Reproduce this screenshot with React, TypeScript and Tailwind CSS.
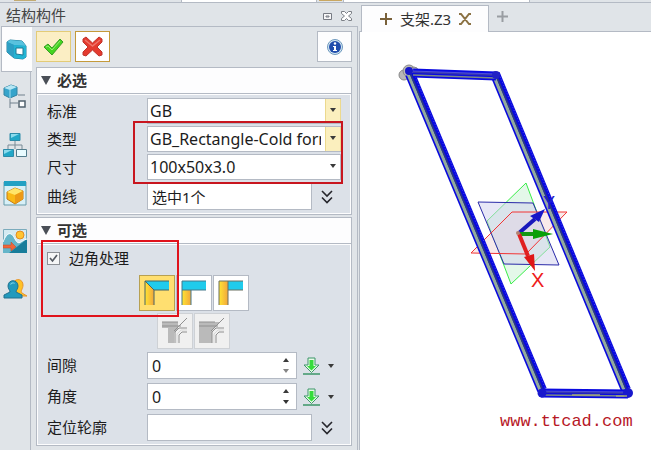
import React from "react";

const field = "border border-[#b4bac4] bg-white text-[#1c1c1c] outline-none";

function Caret({ tone = "#3a3a3a" }: { tone?: string }) {
  return (
    <svg width="6" height="4" viewBox="0 0 6 4" aria-hidden="true">
      <path d="M0 0h6L3 4z" fill={tone} />
    </svg>
  );
}

function SelectRow({ id, label, value, yellow }: { id: string; label: string; value: string; yellow?: boolean }) {
  return (
    <div className="flex h-7 items-start">
      <label htmlFor={id} className="w-[100px] shrink-0 leading-[26px]">
        {label}
      </label>
      <div className="relative h-[26px] min-w-0 flex-1">
        <select id={id} className={`${field} h-[26px] w-full appearance-none overflow-hidden pl-[2px] pr-[19px] text-base whitespace-nowrap`}>
          <option>{value}</option>
        </select>
        <span
          className={`pointer-events-none absolute top-px right-0 flex h-6 w-4 justify-center pt-[9px] ${
            yellow ? "border-x border-[#ecd98e] bg-[#fbefbe]" : ""
          }`}
        >
          <Caret />
        </span>
      </div>
    </div>
  );
}

function MoreButton({ label }: { label: string }) {
  return (
    <button type="button" aria-label={label} className="flex h-[27px] w-[29px] items-center justify-center">
      <svg width="12" height="14" viewBox="0 0 12 14" fill="none" stroke="#26262c" strokeWidth="1.6">
        <path d="M1 1l5 5 5-5M1 7.500l5 5 5-5" />
      </svg>
    </button>
  );
}

function PickRow({ id, label, value }: { id: string; label: string; value: string }) {
  return (
    <div className="flex h-[27px] items-start">
      <label htmlFor={id} className="w-[100px] shrink-0 leading-[27px]">
        {label}
      </label>
      <input id={id} type="text" defaultValue={value} className={`${field} h-[27px] min-w-0 flex-1 px-1 text-[15px]`} />
      <MoreButton label={`${label} 更多`} />
    </div>
  );
}

function SpinRow({ id, label, dim }: { id: string; label: string; dim?: boolean }) {
  return (
    <div className="flex h-[27px] items-start">
      <label htmlFor={id} className="w-[100px] shrink-0 leading-[27px]">
        {label}
      </label>
      <div className={`${field} flex h-[27px] min-w-0 flex-1`}>
        <input id={id} type="text" defaultValue="0" className="min-w-0 flex-1 px-1 text-base outline-none" />
        <div className="flex w-5 flex-col items-center justify-around py-px">
          <button type="button" aria-label={`${label} 增加`} className="rotate-180">
            <Caret />
          </button>
          <button type="button" aria-label={`${label} 减少`}>
            <Caret tone={dim ? "#858585" : "#333"} />
          </button>
        </div>
      </div>
      <button type="button" aria-label={`${label} 选项`} className="flex h-[27px] w-11 items-center pl-[6px]">
        <svg width="17" height="18" viewBox="0 0 17 18">
          <path d="M5 1h7v7h4l-7.500 7.500L1 8h4z" fill="#e9fbe8" stroke="#3d9668" />
          <path d="M6.500 3h4v6h2.500l-4.500 4.500L4 9h2.500z" fill="#35dc3b" />
          <path d="M0 17h17" stroke="#3d9668" strokeWidth="1.500" />
        </svg>
        <span className="flex w-[21px] justify-center">
          <Caret />
        </span>
      </button>
    </div>
  );
}

function Section({ title, children }: { title: string; children: React.ReactNode }) {
  return (
    <section className="border border-[#b4bac4] bg-[#fdfdfe] text-[15px] text-[#1c1c1c]">
      <h2 className="flex h-[26px] items-center gap-[6px] border-b border-[#b4bac4] pl-1 font-bold text-[#333]">
        <svg width="10" height="9" viewBox="0 0 10 9" aria-hidden="true">
          <path d="M0 0h10L5 9z" fill="#4a4f57" />
        </svg>
        {title}
      </h2>
      <div className="m-px bg-[#dce1e8]">{children}</div>
    </section>
  );
}

function CornerIcon({ kind }: { kind: "miter" | "top" | "side" }) {
  return (
    <svg width="26" height="26" viewBox="0 0 26 26" aria-hidden="true">
      <defs>
        <linearGradient id={`gold-${kind}`}>
          <stop offset="0" stopColor="#ffe433" />
          <stop offset="1" stopColor="#f2a63c" />
        </linearGradient>
      </defs>
      {kind === "miter" && (
        <>
          <path d="M1 1l9 9v15H1z" fill={`url(#gold-${kind})`} />
          <path d="M1 1h24v9H10z" fill="#1fcbec" />
          <path d="M1 25V1h24M1 1l9 9v15M10 10h15" fill="none" stroke="#476466" />
        </>
      )}
      {kind === "top" && (
        <>
          <path d="M1 10h9v15H1z" fill={`url(#gold-${kind})`} />
          <path d="M1 1h24v9H1z" fill="#1fcbec" />
          <path d="M1 25V1h24M1 10h24M10 10v15" fill="none" stroke="#47798a" />
        </>
      )}
      {kind === "side" && (
        <>
          <path d="M1 1h9v24H1z" fill={`url(#gold-${kind})`} />
          <path d="M10 1h15v9H10z" fill="#1fcbec" />
          <path d="M1 25V1h24M10 1v24M10 10h15" fill="none" stroke="#6b7160" />
        </>
      )}
    </svg>
  );
}

function TrimIcon({ filled }: { filled?: boolean }) {
  return (
    <svg width="26" height="26" viewBox="0 0 26 26" aria-hidden="true" fill="none">
      <path d={filled ? "M0 4h21l-8 9v12H0z" : "M0 4h16v7l-4 4v10H6V10H0z"} fill="#bababa" />
      <path d="M0 4h16M0 8h19M13 25V14l4-4h8M17 25v-8l3-3h5M25 0L12 13" stroke="#909090" />
      <path d="M15 25V16l4-4h6" stroke="#d9d9d9" />
    </svg>
  );
}

function TubeIcon() {
  return (
    <svg width="21" height="21" viewBox="0 0 21 21" aria-hidden="true">
      <path d="M1 3l3-2 12 1 4 5v11l-3 2-9-1-7-6z" fill="#1f9dc0" stroke="#23809d" />
      <path d="M1 3l3-2 12 1 4 5-12-1z" fill="#58c2de" />
      <path d="M1 3l7 3v13l-7-6z" fill="#2d9fc4" />
      <path d="M8 6l12 1v11l-3 2-9-1z" fill="#22b4d3" />
      <path d="M10 9h7v7l-7-1z" fill="#fff" stroke="#1c7895" />
    </svg>
  );
}

function RailIcons() {
  const button = "flex h-[48px] w-full items-center justify-center";
  return (
    <>
      <button type="button" aria-label="历史" className={button}>
        <svg width="24" height="27" viewBox="0 0 24 27" fill="none">
          <path d="M1 4l7-3 6 2v8l-7 3-6-3z" fill="#36a4cb" stroke="#3384a3" />
          <path d="M1 4l7-3 6 2-7 3z" fill="#b5e6f4" />
          <path d="M7 6v8" stroke="#a1def1" />
          <path d="M15 11h7M7 15v9M7 19h8" stroke="#71808d" />
          <path d="M16 17h6v6h-6z" fill="#fff" stroke="#53636f" strokeWidth="1.500" />
        </svg>
      </button>
      <button type="button" aria-label="装配" className={button}>
        <svg width="24" height="24" viewBox="0 0 24 24" fill="none">
          <path d="M12 8v8M5 17v-5h14v5" stroke="#788b96" />
          <path d="M7 .5h10v7H7zM.5 16.500h10v7H.5z" fill="#22a7c7" stroke="#2d8ba9" />
          <path d="M8 1h8L8 5zM1 17h8l-8 4z" fill="#8bdbed" />
          <path d="M13.500 16.500h10v7h-10z" fill="#e8fbff" stroke="#527c8c" />
        </svg>
      </button>
      <button type="button" aria-label="视图" className={button}>
        <svg width="24" height="25" viewBox="0 0 24 25">
          <path d="M1 1h22v23H1z" fill="#d7f0f7" stroke="#669baa" />
          <path d="M1 0h22v5H1z" fill="#22a1c3" />
          <path d="M4 11l8-4 8 3v8l-8 5-8-5z" fill="#f9b916" stroke="#c57a15" />
          <path d="M4 11l8-4 8 3-8 4z" fill="#ffe66a" />
          <path d="M12 14l8-4v8l-8 5z" fill="#ec9a16" />
        </svg>
      </button>
      <button type="button" aria-label="视觉" className={button}>
        <svg width="24" height="24" viewBox="0 0 24 24">
          <path d="M.5.5h23v23H.5z" fill="#d5eaf2" stroke="#7babbc" />
          <path d="M0 13C4 3 8 2 12 10s6 1 12 0v14H0z" fill="#65b5c9" />
          <path d="M6 24L24 10v14z" fill="#187d9a" />
          <path d="M0 13C4 3 8 2 12 10s6 1 12 0" fill="none" stroke="#fff" />
          <circle cx="17" cy="6" r="4" fill="#ffc431" stroke="#e38c22" />
          <path d="M0 16h8v-3l5 5-5 4v-3H0z" fill="#ef6639" stroke="#bd4628" strokeWidth=".5" />
        </svg>
      </button>
      <button type="button" aria-label="用户" className={button}>
        <svg width="24" height="20" viewBox="0 0 24 20">
          <path d="M11 3c2-4 9-3 9 3 0 4-3 6-1 8l5 3H12z" fill="#ffc227" stroke="#e7942d" />
          <path d="M5 7c0-7 10-7 10 0 0 3-2 4-2 6l6 3v3H1v-3l6-3c0-2-2-3-2-6z" fill="#239abd" stroke="#23718e" />
          <path d="M7 6c1-4 5-3 5-1-2-1-3 0-5 1z" fill="#79cde4" />
        </svg>
      </button>
    </>
  );
}

type Pt = [number, number];

function Beam({ from, to, flat }: { from: Pt; to: Pt; flat?: boolean }) {
  const line = (dx: number, dy: number, color: string, width: number, dash?: string) => (
    <line x1={from[0] + dx} y1={from[1] + dy} x2={to[0] + dx} y2={to[1] + dy} stroke={color} strokeWidth={width} strokeDasharray={dash} />
  );
  return flat ? (
    <g>
      {line(0, 0, "#0a0ae0", 9)}
      {line(0, -1, "#3535b0", 2)}
      {line(0, -2, "#6464e4", 0.7)}
      {line(0, 2, "#7c8a86", 1.6)}
    </g>
  ) : (
    <g>
      {line(0, 0, "#0808de", 10)}
      {line(-2, 0, "#93ab9c", 3.2)}
      {line(0.6, 0, "#2c3a80", 1.6)}
      {line(4, 0, "#5a5af0", 0.8, "1 2")}
    </g>
  );
}

function Model() {
  return (
    <svg viewBox="360 33 291 417" className="block w-full" role="img" aria-label="支架模型">
      <path d="M526 184L487 222 511 285 550 248z" fill="#d9f5df" fillOpacity=".7" stroke="#38ed48" />
      <path d="M512 213h55L526 255l-55-1z" fill="#f3dcdc" fillOpacity=".6" />
      <path d="M478 203l55 1 26 62-55-1z" fill="#d0d0ee" fillOpacity=".5" stroke="#2929a8" />
      <path d="M512 213h55L526 255l-55-1z" fill="none" stroke="#f23434" />
      <g fill="#b8b8b8" stroke="#888">
        <circle cx="404" cy="76" r="5" />
        <circle cx="409" cy="72" r="6" />
        <circle cx="414" cy="72" r="4" />
      </g>
      <Beam from={[410, 75]} to={[542, 391]} />
      <Beam from={[495, 75]} to={[626, 391]} />
      <Beam from={[413, 74]} to={[496, 77]} flat />
      <Beam from={[541, 394]} to={[628, 395]} flat />
      <circle cx="409" cy="72" r="4" fill="#1717c8" />
      <circle cx="496" cy="76" r="4" fill="#2222c4" />
      <circle cx="542" cy="394" r="4.500" fill="#1818cd" />
      <circle cx="628" cy="394" r="5" fill="#1818cd" />
      <path d="M572 396h28M616 397h11" stroke="#a1a67a" strokeWidth="1.500" />
      <g strokeWidth="4">
        <path d="M519 234l16-14" stroke="#1818bb" />
        <path d="M530 217l15-7-6 13z" fill="#1717c8" />
        <path d="M520 235h14" stroke="#139713" />
        <path d="M533 230l20 5-20 5z" fill="#08a008" />
        <path d="M519 235l9 22" stroke="#e02020" />
        <path d="M524 258l10-3 1 17z" fill="#df1717" />
      </g>
      <circle cx="518" cy="234" r="2" fill="#b58170" />
      <g fontFamily="Liberation Sans, sans-serif">
        <text x="543" y="210" fontSize="18" fill="#2020d0">
          Y
        </text>
        <text x="531" y="288" fontSize="20" fill="#ee1b1b">
          X
        </text>
      </g>
      <text x="500" y="427" fontFamily="Liberation Mono, monospace" fontSize="17" fill="#b71826">
        www.ttcad.com
      </text>
    </svg>
  );
}

export default function App() {
  const corner = "flex h-9 w-9 items-center justify-center border";
  return (
    <div className="flex min-h-screen flex-col overflow-hidden bg-[#e0e4e8] font-['Noto_Sans','Noto_Sans_CJK_SC',sans-serif]">
      <div className="flex h-[3px] shrink-0 border-b border-[#b4bac4]">
        <i className="ml-[14px] h-px w-[22px] bg-[#c2ab72]" />
        <i className="ml-[145px] w-[136px] border-x border-[#b4bac4] bg-white" />
        <i className="ml-[2px] h-px w-[23px] bg-[#c9a761]" />
        <i className="ml-px w-[187px] border-x border-[#b4bac4] bg-white" />
      </div>
      <div className="flex flex-1">
        <aside className="flex w-[358px] shrink-0 flex-col">
          <header className="flex h-[23px] items-center pr-[6px] pl-[6px]">
            <h1 className="flex-1 text-[15px] leading-5 text-[#444]">结构构件</h1>
            <button type="button" aria-label="浮动" className="mt-1 mr-[9px]">
              <svg width="9" height="7" viewBox="0 0 9 7" fill="#f7f7f8" stroke="#777b83">
                <path d="M.5.5h8v6h-8z" />
                <path d="M3 3h3v1H3z" />
              </svg>
            </button>
            <button type="button" aria-label="关闭" className="mt-[2px]">
              <svg width="11" height="10" viewBox="0 0 11 10">
                <path d="M.5.5h3l2 2 2-2h3v2l-3 2.500 3 2.500v2h-3l-2-2-2 2h-3v-2l3-2.500-3-2.500z" fill="#fff" stroke="#7c8087" />
              </svg>
            </button>
          </header>
          <div className="flex flex-1">
            <nav className="w-[31px] shrink-0 border-r border-[#b4bac4]" aria-label="管理器">
              <button
                type="button"
                aria-label="结构构件"
                className="ml-px flex h-[46px] w-[31px] items-center border border-r-0 border-[#b4bac4] bg-[#fdfdfe] pl-1"
              >
                <TubeIcon />
              </button>
              <div className="pt-px">
                <RailIcons />
              </div>
            </nav>
            <div className="min-w-0 flex-1 border-t border-r border-[#b4bac4] pr-[5px] pl-[5px]">
              <div className="flex h-[40px] items-start gap-1 pt-1">
                <button type="button" aria-label="确定" className="flex h-[31px] w-[35px] items-center justify-center border border-[#e3cb77] bg-[#fbeec4]">
                  <svg width="21" height="18" viewBox="0 0 21 18">
                    <path d="M1 9l4-3 4 4 8-9 3 3L9 17z" fill="#44d521" stroke="#379d25" />
                    <path d="M3 9l2-1 4 4 8-9" fill="none" stroke="#94ed71" />
                  </svg>
                </button>
                <button type="button" aria-label="取消" className="flex h-[31px] w-[35px] items-center justify-center border border-[#c49a3b] bg-white">
                  <svg width="21" height="21" viewBox="0 0 21 21">
                    <path d="M1 3l3-2 6.500 6L17 1l3 2v3l-5 5 5 5v3l-3 1-6.500-6L4 20l-3-1v-3l5-5-5-5z" fill="#e43b2f" stroke="#bf342c" />
                    <path d="M3 4l7.500 6L18 4" fill="none" stroke="#f0766a" strokeWidth="1.500" />
                  </svg>
                </button>
                <button type="button" aria-label="信息" className="ml-auto flex h-[31px] w-[35px] items-center justify-center border border-[#b4bac4] bg-[#fdfdfe]">
                  <svg width="16" height="16" viewBox="0 0 16 16">
                    <circle cx="8" cy="8" r="7.500" fill="#d6e8f3" stroke="#6d98bd" />
                    <circle cx="8" cy="8" r="6" fill="#1f4dad" />
                    <circle cx="8" cy="4.500" r="1.200" fill="#fff" />
                    <path d="M6 7h3v4h1v1H6v-1h1V8H6z" fill="#fff" />
                  </svg>
                </button>
              </div>
              <div className="flex flex-col gap-[2px]">
                <Section title="必选">
                  <div className="relative pt-[3px] pr-[9px] pb-[3px] pl-[9px]">
                    <SelectRow id="standard" label="标准" value="GB" yellow />
                    <SelectRow id="type" label="类型" value="GB_Rectangle-Cold formed" yellow />
                    <SelectRow id="size" label="尺寸" value="100x50x3.0" />
                    <div className="pt-px">
                      <PickRow id="curve" label="曲线" value="选中1个" />
                    </div>
                    <div className="pointer-events-none absolute top-[26px] right-[7px] left-[95px] h-[63px] border-2 border-[#c8161f]" />
                  </div>
                </Section>
                <Section title="可选">
                  <div className="relative pt-[2px] pr-[9px] pb-[3px] pl-[9px]">
                    <label className="flex h-[22px] items-center gap-[9px]">
                      <span className="relative flex h-[13px] w-[13px]">
                        <input type="checkbox" defaultChecked className="h-[13px] w-[13px] appearance-none border border-[#8c9096] bg-[#f5f6f7]" />
                        <svg className="pointer-events-none absolute top-[2px] left-[2px]" width="9" height="9" viewBox="0 0 9 9">
                          <path d="M1 4l2.500 3L8 1" fill="none" stroke="#555b63" strokeWidth="1.700" />
                        </svg>
                      </span>
                      边角处理
                    </label>
                    <div className="mt-[6px] flex gap-px pl-[92px]">
                      <button type="button" aria-label="斜接" className={`${corner} border-[#b7a052] bg-[#ffdf70]`}>
                        <CornerIcon kind="miter" />
                      </button>
                      <button type="button" aria-label="顶部对接" className={`${corner} border-[#b4bac4] bg-white`}>
                        <CornerIcon kind="top" />
                      </button>
                      <button type="button" aria-label="侧面对接" className={`${corner} border-[#b4bac4] bg-white`}>
                        <CornerIcon kind="side" />
                      </button>
                    </div>
                    <div className="mt-[2px] flex gap-px pl-[110px]">
                      <button type="button" disabled aria-label="简单切割" className={`${corner} border-[#ced1d5] bg-[#f0f0f0]`}>
                        <TrimIcon />
                      </button>
                      <button type="button" disabled aria-label="完整切割" className={`${corner} border-[#ced1d5] bg-[#f0f0f0]`}>
                        <TrimIcon filled />
                      </button>
                    </div>
                    <div className="mt-[3px] flex flex-col gap-1">
                      <SpinRow id="gap" label="间隙" dim />
                      <SpinRow id="angle" label="角度" />
                      <PickRow id="profile" label="定位轮廓" value="" />
                    </div>
                    <div className="pointer-events-none absolute -top-[5px] left-[3px] h-[77px] w-[138px] border-2 border-[#e0121b]" />
                  </div>
                </Section>
              </div>
            </div>
          </div>
        </aside>
        <main className="ml-px flex min-w-0 flex-1 flex-col">
          <div className="flex h-[29px] items-end pl-[2px]" role="tablist">
            <div role="tab" aria-selected="true" className="z-10 flex h-[27px] w-[128px] items-center border border-b-0 border-[#b4bac4] bg-[#fdfdfe] pl-[18px] text-[15px] text-[#333]">
              <svg width="12" height="12" viewBox="0 0 12 12" stroke="#79613a" strokeWidth="2">
                <path d="M6 0v12M0 6h12" />
              </svg>
              <span className="pl-2">支架.Z3</span>
              <button type="button" aria-label="关闭标签" className="ml-2">
                <svg width="12" height="12" viewBox="0 0 12 12" fill="none" stroke="#8b7244" strokeWidth="2">
                  <path d="M0 1h2l8 10h2M12 1h-2L2 11H0" />
                </svg>
              </button>
            </div>
            <button type="button" aria-label="新标签" className="flex h-[27px] flex-1 items-center pb-1 pl-2">
              <svg width="11" height="11" viewBox="0 0 11 11" stroke="#999da2" strokeWidth="2">
                <path d="M5.500 0v11M0 5.500h11" />
              </svg>
            </button>
          </div>
          <div className="-mt-px flex-1 border-t border-l border-[#b4bac4] bg-white">
            <Model />
          </div>
        </main>
      </div>
    </div>
  );
}
